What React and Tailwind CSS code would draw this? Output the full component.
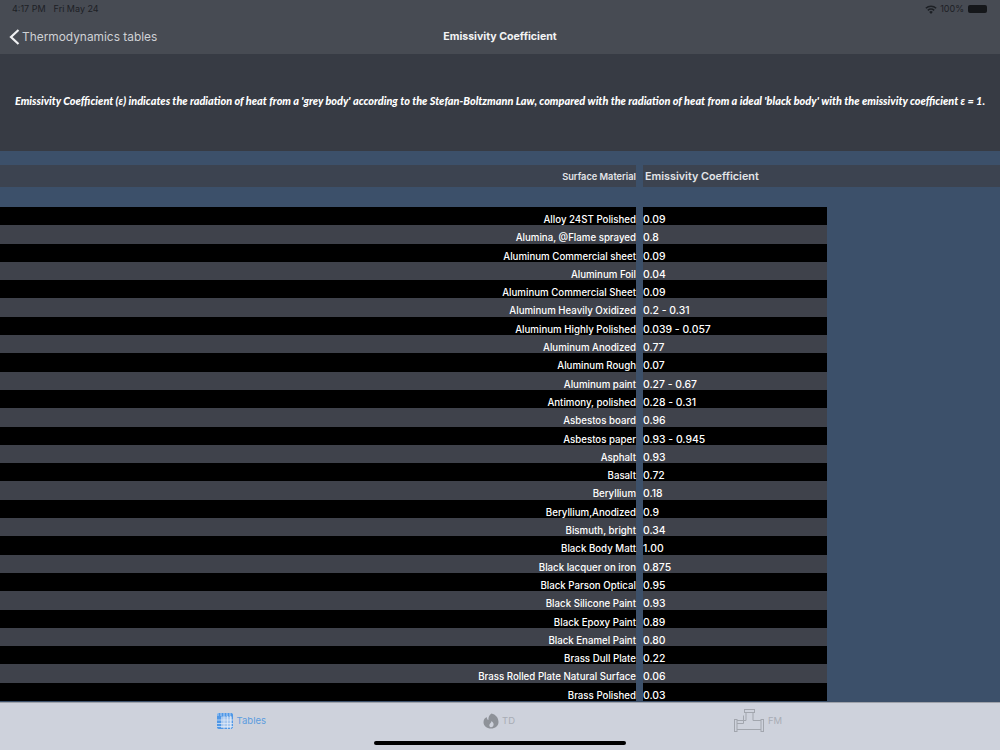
const rows = [
  ["Alloy 24ST Polished", "0.09"],
  ["Alumina, @Flame sprayed", "0.8"],
  ["Aluminum Commercial sheet", "0.09"],
  ["Aluminum Foil", "0.04"],
  ["Aluminum Commercial Sheet", "0.09"],
  ["Aluminum Heavily Oxidized", "0.2 - 0.31"],
  ["Aluminum Highly Polished", "0.039 - 0.057"],
  ["Aluminum Anodized", "0.77"],
  ["Aluminum Rough", "0.07"],
  ["Aluminum paint", "0.27 - 0.67"],
  ["Antimony, polished", "0.28 - 0.31"],
  ["Asbestos board", "0.96"],
  ["Asbestos paper", "0.93 - 0.945"],
  ["Asphalt", "0.93"],
  ["Basalt", "0.72"],
  ["Beryllium", "0.18"],
  ["Beryllium,Anodized", "0.9"],
  ["Bismuth, bright", "0.34"],
  ["Black Body Matt", "1.00"],
  ["Black lacquer on iron", "0.875"],
  ["Black Parson Optical", "0.95"],
  ["Black Silicone Paint", "0.93"],
  ["Black Epoxy Paint", "0.89"],
  ["Black Enamel Paint", "0.80"],
  ["Brass Dull Plate", "0.22"],
  ["Brass Rolled Plate Natural Surface", "0.06"],
  ["Brass Polished", "0.03"],
];

function TablesIcon() {
  return (
    <svg width="16" height="16" viewBox="0 0 16 16" fill="none">
      <rect x="0.5" y="0.5" width="15" height="15" rx="1.5" fill="#a9c8ee" stroke="#4f97e6" />
      <rect x="0.5" y="0.5" width="15" height="3" fill="#4f97e6" />
      <rect x="0.5" y="0.5" width="3.5" height="15" fill="#4f97e6" />
      <path d="M0 7h16M0 10.5h16M0 13.5h16M7 3v13M10.5 3v13M13.5 3v13M1 0v3M4 0v3M7 0v3M10 0v3M13 0v3" stroke="#e4edf8" strokeWidth="0.7" />
    </svg>
  );
}

function FlameIcon() {
  return (
    <svg width="16" height="16" viewBox="0 0 16 16">
      <path d="M8.5 0.5C12.5 1.5 15.5 4.5 15.5 9C15.5 13 12.2 15.5 8 15.5C3.8 15.5 0.5 13 0.5 9C0.5 6.5 2 4.6 4 4.2C3.8 5.6 4.4 6.6 5.4 7C5.2 4.4 6.2 1.8 8.5 0.5Z" fill="#8e9299" />
      <path d="M8.6 8C10.4 9.6 11 11 10.4 12.6C9.9 14 8.6 14.6 7.6 14.2C6.4 13.7 6 12.4 6.6 11.2C7.2 10.2 8.4 9.4 8.6 8Z" fill="#ced2dc" />
    </svg>
  );
}

function PipeIcon() {
  return (
    <svg width="30" height="24" viewBox="0 0 30 24" fill="none" stroke="#a2a6ae" strokeWidth="1">
      <rect x="10.5" y="0.5" width="10" height="3" />
      <rect x="0.5" y="10.5" width="2.5" height="12" />
      <rect x="27" y="10.5" width="2.5" height="12" />
      <path d="M12 3.5V11.5H3M19 3.5V11.5H27M3 20.5H27M3 14.5H9.5V6.5" />
    </svg>
  );
}

export default function App() {
  return (
    <div className="w-[1000px] h-[750px] overflow-hidden flex flex-col bg-[#3c506a] text-white font-['Inter','Liberation_Sans',sans-serif]">
      <header className="h-[54px] shrink-0 bg-[#474b53] flex flex-col">
        <div className="h-[18px] shrink-0 flex items-center justify-between pl-[12px] pr-[12px] text-[9px] text-[#1d2025]">
          <div className="flex gap-[8px]">
            <span>4:17 PM</span>
            <span>Fri May 24</span>
          </div>
          <div className="flex items-center gap-[3px]">
            <svg width="12" height="9" viewBox="0 0 12 9">
              <path d="M6 9 4.2 6.9a2.6 2.6 0 0 1 3.6 0ZM3.3 5.9 2.3 4.8a5.4 5.4 0 0 1 7.4 0L8.7 5.9a4 4 0 0 0-5.4 0ZM1.4 3.8.3 2.7a8.3 8.3 0 0 1 11.4 0l-1.1 1.1a6.8 6.8 0 0 0-9.2 0Z" fill="#1d2025" />
            </svg>
            <span>100%</span>
            <div className="ml-[1px] w-[19px] h-[8px] bg-[#15171a] rounded-[2px] mr-[1px]" />
          </div>
        </div>
        <div className="relative flex-1 flex items-center pl-[9px] pt-[1px]">
          <svg width="11" height="16" viewBox="0 0 11 16" fill="none" className="mr-[2px]">
            <path d="M9.5 1 2 8l7.5 7" stroke="#f0f1f3" strokeWidth="2.2" />
          </svg>
          <span className="text-[11.9px] text-[#cfd1d5]">Thermodynamics tables</span>
          <span className="absolute left-0 right-0 text-center text-[10.6px] font-bold text-[#f3f4f5]">Emissivity Coefficient</span>
        </div>
      </header>

      <section className="h-[97px] shrink-0 bg-[#373b44] flex items-center justify-center pb-[2px]">
        <p className="font-['Lato',sans-serif] italic font-black text-[10.9px] whitespace-nowrap">
          Emissivity Coefficient (ε) indicates the radiation of heat from a 'grey body' according to the Stefan-Boltzmann Law, compared with the radiation of heat from a ideal 'black body' with the emissivity coefficient ε = 1.
        </p>
      </section>

      <div className="h-[14px] shrink-0" />

      <div className="h-[22px] shrink-0 bg-[#3c4350] flex items-center">
        <div className="w-[636px] pt-[1px] text-right text-[9.25px] font-semibold text-[#e3e5e8]">Surface Material</div>
        <div className="w-[7px] h-full bg-[#3c506a]" />
        <div className="pl-[2px] pt-[1px] text-[10.8px] leading-[20px] font-semibold text-[#e3e5e8]">Emissivity Coefficient</div>
      </div>

      <div className="h-[20px] shrink-0" />

      <div className="flex-1 overflow-hidden">
        {rows.map(([name, value], i) => {
          const bg = i % 2 === 0 ? "bg-black" : "bg-[#3f424b]";
          return (
            <div key={name + i} className="h-[18.3px] flex text-[9.7px] font-medium leading-[18.3px]">
              <div className={`w-[636px] pt-[4px] text-right ${bg}`}>{name}</div>
              <div className="w-[7px]" />
              <div className={`w-[184px] pt-[4px] text-[10.4px] ${bg}`}>{value}</div>
            </div>
          );
        })}
      </div>

      <nav className="relative h-[48px] shrink-0 bg-[#ced2dc] border-t border-[#9ea2aa] flex items-start">
        <div className="w-[333px] flex items-center justify-end gap-[4px] pr-[67px] pt-[10px] text-[9.5px] text-[#5c9ddf]">
          <TablesIcon />
          <span>Tables</span>
        </div>
        <div className="flex-1 flex items-center gap-[3px] pl-[150px] pt-[10px] text-[9.5px] text-[#a9adb5]">
          <FlameIcon />
          <span>TD</span>
        </div>
        <div className="w-[333px] flex items-center gap-[4px] pl-[67px] pt-[6px] text-[9.5px] text-[#a9adb5]">
          <PipeIcon />
          <span>FM</span>
        </div>
        <div className="absolute left-[374px] top-[38px] w-[252px] h-[4px] rounded-full bg-black" />
      </nav>
    </div>
  );
}
